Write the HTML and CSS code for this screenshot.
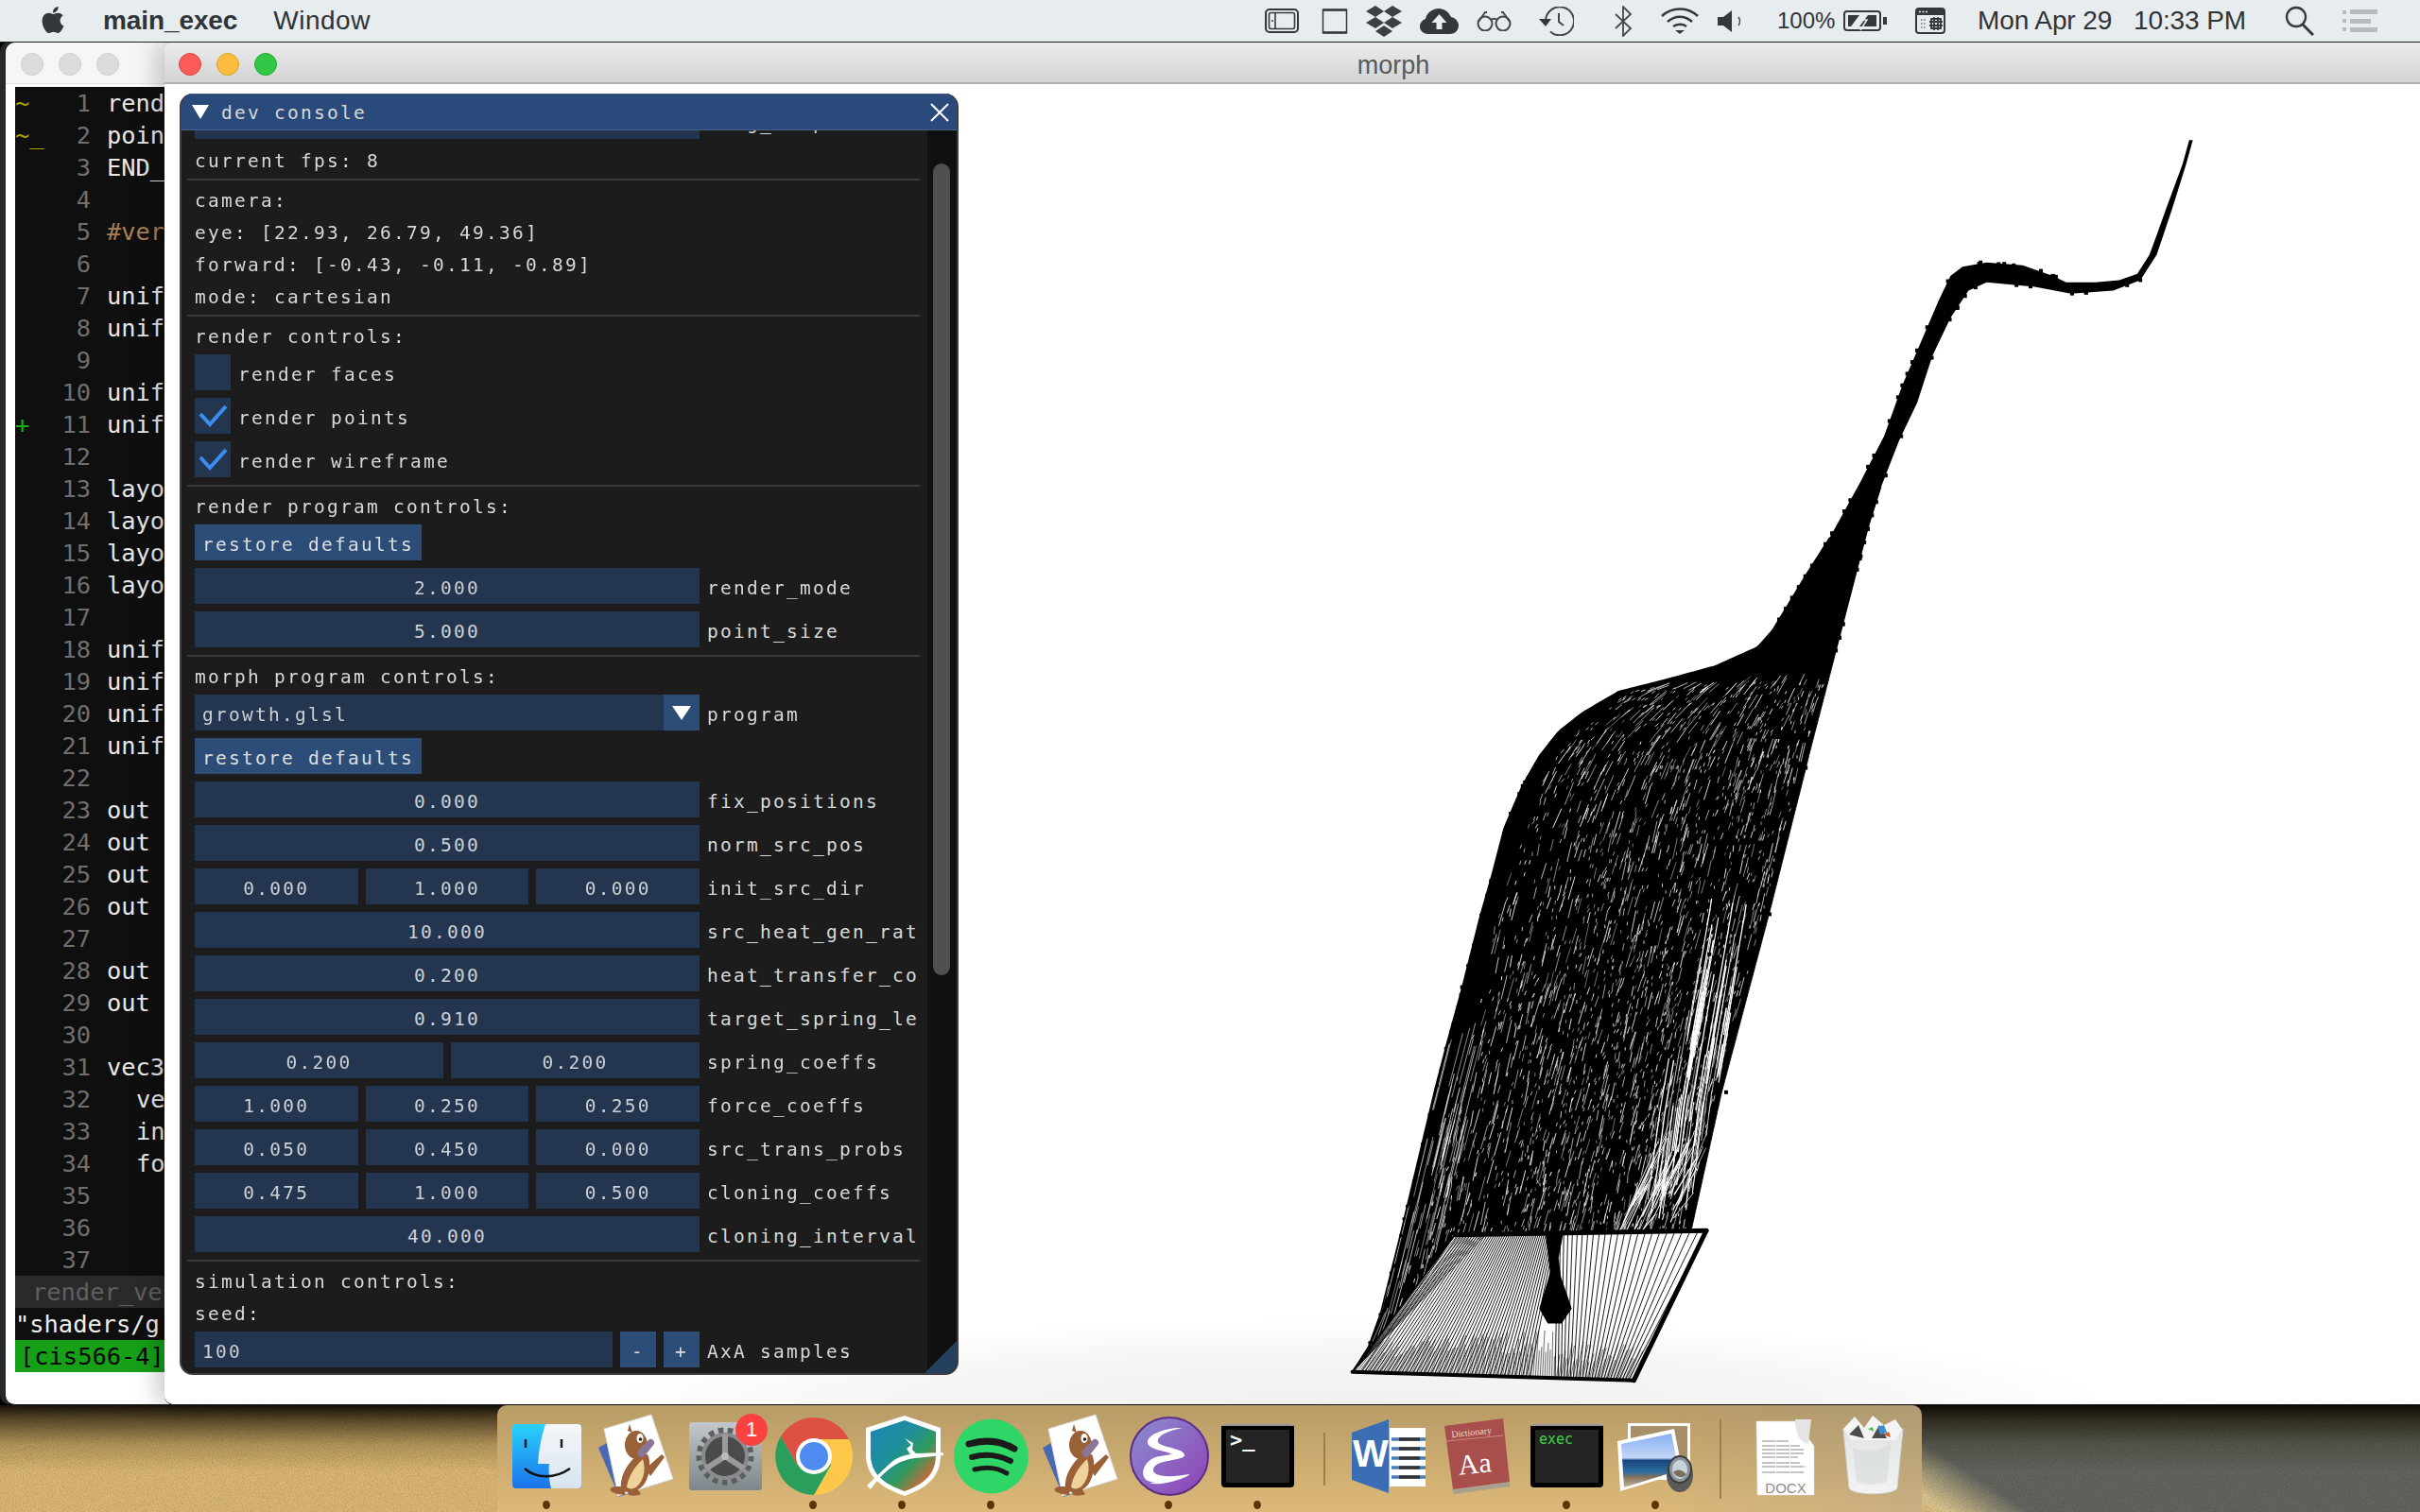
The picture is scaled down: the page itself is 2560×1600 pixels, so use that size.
FILE: index.html
```html
<!DOCTYPE html>
<html lang="en">
<head>
<meta charset="utf-8">
<title>morph</title>
<link rel="stylesheet" href="styles.css">
</head>
<body>
<div class="desktop">
  <div class="wall">
    <svg class="grain" width="2560" height="113"><filter id="sand"><feTurbulence type="fractalNoise" baseFrequency="0.9" numOctaves="2" seed="4"/><feColorMatrix values="0 0 0 0 0  0 0 0 0 0  0 0 0 0 0  0 0 0 .9 -.32"/></filter><rect width="2560" height="113" filter="url(#sand)"/></svg>
  </div>

  <header class="menubar">
    <svg class="apple" width="28" height="32" viewBox="0 0 24 24"><path fill="#33383c" d="M12.152 6.896c-.948 0-2.415-1.078-3.96-1.04-2.04.027-3.91 1.183-4.961 3.014-2.117 3.675-.546 9.103 1.519 12.09 1.013 1.454 2.208 3.09 3.792 3.039 1.52-.065 2.09-.987 3.935-.987 1.831 0 2.35.987 3.96.948 1.637-.026 2.676-1.48 3.676-2.948 1.156-1.688 1.636-3.325 1.662-3.415-.039-.013-3.182-1.221-3.22-4.857-.026-3.04 2.48-4.494 2.597-4.559-1.429-2.09-3.623-2.324-4.39-2.376-2-.156-3.675 1.09-4.61 1.09zM15.53 3.83c.843-1.012 1.4-2.427 1.245-3.83-1.207.052-2.662.805-3.532 1.818-.78.896-1.454 2.338-1.273 3.714 1.338.104 2.715-.688 3.559-1.701"/></svg>
    <span class="menu-app">main_exec</span>
    <span class="menu-item">Window</span>
    <div class="status">
      <svg width="36" height="26" viewBox="0 0 36 26" fill="none" stroke="#33383c"><rect x="1" y="1" width="34" height="24" rx="4" stroke-width="2"/><rect x="4.5" y="4.5" width="27" height="17" rx="2" stroke-width="1.6"/><path d="M11 5v16" stroke-width="1.6"/><circle cx="8" cy="13" r="1" fill="#33383c" stroke="none"/></svg>
      <svg class="g24" width="28" height="27" viewBox="0 0 28 27" fill="none" stroke="#33383c"><rect x="1.5" y="1.5" width="25" height="24" stroke-width="1.5"/><path d="M1 1.5h26M1 25.5h26" stroke-width="2.6"/></svg>
      <svg class="g19" width="38" height="33" viewBox="0 0 38 33" fill="#3b4044"><path d="M10 0l9 6-9 6-10-6zM28 0l10 6-10 6-9-6zM10 12l9 6-9 6-10-6zM28 12l10 6-10 6-9-6zM19 21l9 6-9 6-9-6z"/></svg>
      <svg class="g19" width="41" height="27" viewBox="0 0 41 27"><path fill="#33383c" d="M9 27C3 27 0 23 0 19c0-4 3-7 6-8C7 5 13 0 20 0c6 0 11 4 13 9 5 1 8 5 8 9 0 5-4 9-9 9z"/><path fill="#e7ecef" d="M20.500 6l8 9h-5v7h-6v-7h-5z"/></svg>
      <svg class="g19" width="37" height="21" viewBox="0 0 37 21" fill="none" stroke="#43484c" stroke-width="2"><circle cx="9" cy="13" r="7.500"/><circle cx="28" cy="13" r="7.500"/><path d="M15 9c2-1.500 5-1.500 7 0M2 11L9 1h2M35 11L28 1h-2"/></svg>
      <svg class="g29" width="37" height="31" viewBox="0 0 37 31" fill="none" stroke="#43484c" stroke-width="2"><path d="M7 15a15 15 0 1 1 5 11.500"/><path d="M21 7v9l5 4"/><path fill="#33383c" stroke="none" d="M0 13h13l-6 8z"/></svg>
      <svg class="g43" width="19" height="33" viewBox="0 0 19 33" fill="none" stroke="#43484c" stroke-width="1.800"><path d="M1 9l16 15-8 8V1l8 8L1 24"/></svg>
      <svg class="g30" width="40" height="28" viewBox="0 0 40 28" fill="none" stroke="#33383c" stroke-width="2.500"><path d="M1 9c11-10 27-10 38 0M7 15c8-7 18-7 26 0M13 20c4-3 10-3 14 0"/><path fill="#33383c" stroke="none" d="M15 24h10l-5 4z"/></svg>
      <svg class="g20" width="26" height="23" viewBox="0 0 26 23"><path fill="#33383c" d="M0 7h6l9-7v23l-9-7H0z"/><path fill="none" stroke="#43484c" stroke-width="1.500" d="M22 7c2 3 2 6 0 9"/></svg>
      <span class="status-text g37 pct">100%</span>
      <svg class="g9" width="46" height="22" viewBox="0 0 46 22" fill="none" stroke="#33383c"><rect x="1" y="1" width="38" height="20" rx="3" stroke-width="2"/><path fill="#33383c" stroke="none" d="M5 5h12L8 17H5zM35 5H26L17 17h18z"/><path stroke="#e7ecef" stroke-width="1.500" d="M24 2L19 10h6l-7 11"/><path fill="#33383c" stroke="none" d="M42 7h4v8h-4z"/></svg>
      <svg class="g30" width="32" height="28" viewBox="0 0 32 28" fill="none" stroke="#33383c"><rect x="1" y="1" width="30" height="26" rx="3" stroke-width="2"/><path fill="#33383c" stroke="none" d="M1 1h30v7H1z"/><path stroke="#e7ecef" stroke-width="1.500" stroke-dasharray="2 1.500" d="M4 4.500h9"/><path stroke="#777" stroke-width="1.500" stroke-dasharray="1.500 1.500" d="M6 13h5M6 17h5M6 21h5"/><path stroke-width="1.800" d="M17 12h10v10H17zM20 10v14M24 10v14M15 15h14M15 19h14"/></svg>
      <span class="status-text g34 date">Mon Apr 29</span>
      <span class="status-text g18 time">10:33 PM</span>
      <svg class="g40" width="31" height="32" viewBox="0 0 31 32" fill="none" stroke="#33383c" stroke-width="2.300"><circle cx="12" cy="12" r="10"/><path d="M19 20l11 11" stroke-width="3"/></svg>
      <svg class="g30" width="37" height="24" viewBox="0 0 37 24" fill="#b7bbbd"><path d="M0 1h4v4H0zM8 0h29v5H8zM0 10h4v4H0zM8 10h22v5H8zM0 19h4v4H0zM8 19h29v5H8z"/></svg>
    </div>
  </header>

  <div class="behind"></div>

  <section class="window back">
    <div class="titlebar plain">
      <i class="light off"></i><i class="light off"></i><i class="light off"></i>
    </div>
    <div class="terminal">
      <div class="ln"><i class="sign">~</i><b class="num">1</b><span class="code">rend</span></div>
      <div class="ln"><i class="sign">~_</i><b class="num">2</b><span class="code">poin</span></div>
      <div class="ln"><i class="sign"></i><b class="num">3</b><span class="code">END_</span></div>
      <div class="ln"><i class="sign"></i><b class="num">4</b><span class="code"></span></div>
      <div class="ln"><i class="sign"></i><b class="num">5</b><span class="code pre">#ver</span></div>
      <div class="ln"><i class="sign"></i><b class="num">6</b><span class="code"></span></div>
      <div class="ln"><i class="sign"></i><b class="num">7</b><span class="code">unif</span></div>
      <div class="ln"><i class="sign"></i><b class="num">8</b><span class="code">unif</span></div>
      <div class="ln"><i class="sign"></i><b class="num">9</b><span class="code"></span></div>
      <div class="ln"><i class="sign"></i><b class="num">10</b><span class="code">unif</span></div>
      <div class="ln"><i class="sign add">+</i><b class="num">11</b><span class="code">unif</span></div>
      <div class="ln"><i class="sign"></i><b class="num">12</b><span class="code"></span></div>
      <div class="ln"><i class="sign"></i><b class="num">13</b><span class="code">layo</span></div>
      <div class="ln"><i class="sign"></i><b class="num">14</b><span class="code">layo</span></div>
      <div class="ln"><i class="sign"></i><b class="num">15</b><span class="code">layo</span></div>
      <div class="ln"><i class="sign"></i><b class="num">16</b><span class="code">layo</span></div>
      <div class="ln"><i class="sign"></i><b class="num">17</b><span class="code"></span></div>
      <div class="ln"><i class="sign"></i><b class="num">18</b><span class="code">unif</span></div>
      <div class="ln"><i class="sign"></i><b class="num">19</b><span class="code">unif</span></div>
      <div class="ln"><i class="sign"></i><b class="num">20</b><span class="code">unif</span></div>
      <div class="ln"><i class="sign"></i><b class="num">21</b><span class="code">unif</span></div>
      <div class="ln"><i class="sign"></i><b class="num">22</b><span class="code"></span></div>
      <div class="ln"><i class="sign"></i><b class="num">23</b><span class="code">out</span></div>
      <div class="ln"><i class="sign"></i><b class="num">24</b><span class="code">out</span></div>
      <div class="ln"><i class="sign"></i><b class="num">25</b><span class="code">out</span></div>
      <div class="ln"><i class="sign"></i><b class="num">26</b><span class="code">out</span></div>
      <div class="ln"><i class="sign"></i><b class="num">27</b><span class="code"></span></div>
      <div class="ln"><i class="sign"></i><b class="num">28</b><span class="code">out</span></div>
      <div class="ln"><i class="sign"></i><b class="num">29</b><span class="code">out</span></div>
      <div class="ln"><i class="sign"></i><b class="num">30</b><span class="code"></span></div>
      <div class="ln"><i class="sign"></i><b class="num">31</b><span class="code">vec3</span></div>
      <div class="ln"><i class="sign"></i><b class="num">32</b><span class="code in1">ve</span></div>
      <div class="ln"><i class="sign"></i><b class="num">33</b><span class="code in1">in</span></div>
      <div class="ln"><i class="sign"></i><b class="num">34</b><span class="code in1">fo</span></div>
      <div class="ln"><i class="sign"></i><b class="num">35</b><span class="code"></span></div>
      <div class="ln"><i class="sign"></i><b class="num">36</b><span class="code"></span></div>
      <div class="ln"><i class="sign"></i><b class="num">37</b><span class="code"></span></div>
      <div class="ln status-inactive">render_ve</div>
      <div class="ln msg">"shaders/g</div>
      <div class="ln prompt">[cis566-4]</div>
    </div>
  </section>

  <section class="window front">
    <div class="titlebar">
      <i class="light red"></i><i class="light yellow"></i><i class="light green"></i>
      <span class="title">morph</span>
    </div>
    <div class="viewport">
      <canvas id="mesh" class="mesh" width="950" height="1340"></canvas>
      <div class="dock-shade"></div>
    </div>
  </section>

  <aside class="console">
    <div class="console-title">
      <i class="tri-down"></i>
      <span class="console-name">dev console</span>
      <svg class="close" width="20" height="20" viewBox="0 0 20 20"><path d="M1 1l18 18M19 1L1 19" stroke="#fff" stroke-width="2" fill="none"/></svg>
    </div>
    <div class="console-clip">
      <div class="console-body">
        <div class="row"><div class="fields"><div class="field"></div></div><span class="label">long_step</span></div>
        <p class="txt">current fps: 8</p>
        <hr class="sep">
        <p class="txt">camera:</p>
        <p class="txt">eye: [22.93, 26.79, 49.36]</p>
        <p class="txt">forward: [-0.43, -0.11, -0.89]</p>
        <p class="txt">mode: cartesian</p>
        <hr class="sep">
        <p class="txt">render controls:</p>
        <div class="row"><div class="check"></div><span class="check-label">render faces</span></div>
        <div class="row"><div class="check"><svg width="38" height="38" viewBox="0 0 38 38"><path d="M6 17l10 11L33 9" fill="none" stroke="#3b8ff0" stroke-width="4"/></svg></div><span class="check-label">render points</span></div>
        <div class="row"><div class="check"><svg width="38" height="38" viewBox="0 0 38 38"><path d="M6 17l10 11L33 9" fill="none" stroke="#3b8ff0" stroke-width="4"/></svg></div><span class="check-label">render wireframe</span></div>
        <hr class="sep">
        <p class="txt">render program controls:</p>
        <div class="row"><button class="btn">restore defaults</button></div>
        <div class="row"><div class="fields"><div class="field">2.000</div></div><span class="label">render_mode</span></div>
        <div class="row"><div class="fields"><div class="field">5.000</div></div><span class="label">point_size</span></div>
        <hr class="sep">
        <p class="txt">morph program controls:</p>
        <div class="row"><div class="fields combo"><div class="field left">growth.glsl</div><div class="combo-btn"><i class="tri-small"></i></div></div><span class="label">program</span></div>
        <div class="row"><button class="btn">restore defaults</button></div>
        <div class="row"><div class="fields"><div class="field">0.000</div></div><span class="label">fix_positions</span></div>
        <div class="row"><div class="fields"><div class="field">0.500</div></div><span class="label">norm_src_pos</span></div>
        <div class="row"><div class="fields"><div class="field">0.000</div><div class="field">1.000</div><div class="field">0.000</div></div><span class="label">init_src_dir</span></div>
        <div class="row"><div class="fields"><div class="field">10.000</div></div><span class="label">src_heat_gen_rat</span></div>
        <div class="row"><div class="fields"><div class="field">0.200</div></div><span class="label">heat_transfer_co</span></div>
        <div class="row"><div class="fields"><div class="field">0.910</div></div><span class="label">target_spring_le</span></div>
        <div class="row"><div class="fields"><div class="field">0.200</div><div class="field">0.200</div></div><span class="label">spring_coeffs</span></div>
        <div class="row"><div class="fields"><div class="field">1.000</div><div class="field">0.250</div><div class="field">0.250</div></div><span class="label">force_coeffs</span></div>
        <div class="row"><div class="fields"><div class="field">0.050</div><div class="field">0.450</div><div class="field">0.000</div></div><span class="label">src_trans_probs</span></div>
        <div class="row"><div class="fields"><div class="field">0.475</div><div class="field">1.000</div><div class="field">0.500</div></div><span class="label">cloning_coeffs</span></div>
        <div class="row"><div class="fields"><div class="field">40.000</div></div><span class="label">cloning_interval</span></div>
        <hr class="sep">
        <p class="txt">simulation controls:</p>
        <p class="txt">seed:</p>
        <div class="row"><div class="fields"><div class="field left">100</div><button class="btn square">-</button><button class="btn square">+</button></div><span class="label">AxA samples</span></div>
      </div>
    </div>
    <div class="scrollbar"><div class="thumb"></div></div>
    <svg class="grip" width="34" height="34" viewBox="0 0 34 34"><path d="M34 0v24q0 10-10 10H0z" fill="#25405f"/></svg>
  </aside>

  <footer class="dock">
    <svg width="0" height="0" class="defs"><defs>
      <linearGradient id="finderL" x1="0" y1="0" x2="0" y2="1"><stop offset="0" stop-color="#2ad2fb"/><stop offset="1" stop-color="#1c72ea"/></linearGradient>
      <linearGradient id="finderR" x1="0" y1="0" x2="0" y2="1"><stop offset="0" stop-color="#f6f7f8"/><stop offset="1" stop-color="#d7e4f0"/></linearGradient>
      <linearGradient id="metal" x1="0" y1="0" x2="0" y2="1"><stop offset="0" stop-color="#c2c8cc"/><stop offset="1" stop-color="#7d868a"/></linearGradient>
      <linearGradient id="dash" x1="0" y1="0" x2="1" y2="1"><stop offset="0" stop-color="#1a86b8"/><stop offset=".4" stop-color="#1f8f9a"/><stop offset=".62" stop-color="#2f9a5c"/><stop offset=".85" stop-color="#c9693a"/><stop offset="1" stop-color="#e2502a"/></linearGradient>
      <linearGradient id="emacs" x1="0" y1="0" x2="1" y2="1"><stop offset="0" stop-color="#8a8fd0"/><stop offset="1" stop-color="#8f3fb5"/></linearGradient>
      <linearGradient id="sky" x1="0" y1="0" x2="0" y2="1"><stop offset="0" stop-color="#86aef2"/><stop offset=".45" stop-color="#c4d8f6"/><stop offset=".5" stop-color="#17467e"/><stop offset=".72" stop-color="#2e6f9e"/><stop offset=".8" stop-color="#7f6f5c"/><stop offset="1" stop-color="#c9b79c"/></linearGradient>
      <linearGradient id="cup" x1="0" y1="0" x2="0" y2="1"><stop offset="0" stop-color="#e2e4e4"/><stop offset="1" stop-color="#f2f3f3"/></linearGradient>
      <symbol id="platypus" viewBox="0 0 94 94">
        <path fill="#4a69b5" d="M8 40l14-8 22 55-14 5z"/>
        <path fill="#fff" stroke="#d9d9d9" stroke-width="1" d="M14 20L64 5l23 68-58 18z"/>
        <path fill="#9a6038" d="M36 90c-6 0-18-3-15-7 3-3 11-2 16-1zM40 90l-2-8 8-4 7 11c-4 2-8 2-13 1z"/>
        <path fill="#9a6038" d="M32 84c-2-14 8-29 17-36l11-1c4 7 3 28-8 36-6 4-15 6-20 1z"/>
        <path fill="#efd19a" d="M38 82c1-10 8-22 17-30 3 9 2 21-6 29-4 3-8 3-11 1z"/>
        <ellipse fill="#9a6038" cx="48" cy="37" rx="12" ry="15"/>
        <path fill="#9a6038" d="M58 62l17-15 3 3-15 20zM41 15l3 9-5-2z"/>
        <path fill="#8a7596" d="M50 43l12-12c3-1 6 2 5 5L56 50c-4 1-8-2-6-7z"/>
        <ellipse fill="#fff" cx="52" cy="30" rx="3.500" ry="5"/><circle fill="#222" cx="52.500" cy="31" r="1.800"/>
      </symbol>
      <symbol id="termicon" viewBox="0 0 94 94">
        <rect x="9" y="15" width="77" height="67" rx="4" fill="#000"/>
        <path d="M10 16h75" stroke="#c9c9c9" stroke-width="1.500"/>
        <rect x="14" y="21" width="67" height="56" fill="#242424"/>
      </symbol>
    </defs></svg>

    <div class="slot run"><svg width="94" height="94" viewBox="0 0 94 94"><rect x="11" y="15" width="73" height="68" rx="4" fill="url(#finderL)"/><path d="M46 15h34a4 4 0 0 1 4 4v60a4 4 0 0 1-4 4H52c-2-8-3-16-2-26H38c1-16 4-30 8-42z" fill="url(#finderR)"/><path d="M25 31v9M63 31v9" stroke="#1a1a2a" stroke-width="2.500"/><path d="M24 62c12 11 32 11 48 0" fill="none" stroke="#111" stroke-width="2.500"/></svg><i class="dot"></i></div>
    <div class="slot"><svg width="94" height="94" viewBox="0 0 94 94"><use href="#platypus"/></svg><i class="dot none"></i></div>
    <div class="slot"><svg width="94" height="94" viewBox="0 0 94 94"><rect x="10" y="13" width="77" height="72" rx="3" fill="url(#metal)"/><circle cx="48" cy="49" r="25" fill="none" stroke="#5e5e5e" stroke-width="11" stroke-dasharray="5 4.200"/><circle cx="48" cy="49" r="23" fill="#4b4b4b" stroke="#8b8b8b" stroke-width="4"/><path d="M48 49V26M48 49L28 62M48 49l20 13" stroke="#9b9b9b" stroke-width="6"/><circle cx="48" cy="49" r="4" fill="#bbb"/><circle cx="76" cy="21" r="17" fill="#f9423f"/><text x="76" y="28" class="badge">1</text></svg><i class="dot none"></i></div>
    <div class="slot run"><svg width="94" height="94" viewBox="0 0 94 94"><path fill="#dd5144" d="M48 8a41 41 0 0 1 37 23H48L30 58 13 28A41 41 0 0 1 48 8z"/><path fill="#fdc74a" d="M85 31a41 41 0 0 1-37 59l18-32-18-27z"/><path fill="#2a9f5c" d="M13 28a41 41 0 0 0 35 62l18-32H30z"/><circle cx="48" cy="49" r="19" fill="#fff"/><circle cx="48" cy="49" r="15" fill="#4e8bf0"/></svg><i class="dot"></i></div>
    <div class="slot run"><svg width="94" height="94" viewBox="0 0 94 94"><path fill="#fff" d="M9 19L50 6l38 13v28c0 24-14 35-38 44C24 82 9 70 9 47z"/><path fill="url(#dash)" d="M14 23L50 11l33 12v24c0 21-12 31-33 39C27 78 14 67 14 47z"/><path fill="#fff" d="M10 80l24-23c6-6 14-9 22-10l-4-6 5-4-7-7 9 5-1 7 4 4 29-1v3l-30 3C44 53 30 62 14 84z"/></svg><i class="dot"></i></div>
    <div class="slot run"><svg width="94" height="94" viewBox="0 0 94 94"><circle cx="47.500" cy="49" r="39.500" fill="#2fd566"/><g fill="none" stroke="#1b1b1b" stroke-linecap="round"><path d="M24 36c17-5 34-3 48 5" stroke-width="7"/><path d="M27 50c14-4 29-2 41 4" stroke-width="6"/><path d="M30 63c12-3 24-2 34 4" stroke-width="5"/></g></svg><i class="dot"></i></div>
    <div class="slot"><svg width="94" height="94" viewBox="0 0 94 94"><use href="#platypus"/></svg><i class="dot none"></i></div>
    <div class="slot run"><svg width="94" height="94" viewBox="0 0 94 94"><circle cx="48" cy="49" r="41" fill="url(#emacs)" stroke="#5a2d86" stroke-width="2"/><path fill="#fff" d="M62 19c-12 2-28 8-26 15 2 6 28 6 28 14 0 6-32 4-33 15-1 9 22 8 38 5 2 2-30 14-42 9 10-1 8 1-2-2-8-4-6-18 6-24 6-3 22-3 18-5-6-3-24-4-24-12 0-9 22-16 37-15z"/></svg><i class="dot"></i></div>
    <div class="slot run"><svg width="94" height="94" viewBox="0 0 94 94"><use href="#termicon"/><text x="18" y="39" class="tprompt">&gt;_</text></svg><i class="dot"></i></div>

    <div class="dock-sep short"></div>

    <div class="slot"><svg width="94" height="94" viewBox="0 0 94 94"><rect x="48" y="19" width="38" height="62" fill="#fff"/><path d="M50 31h36M50 41h36M50 51h36M50 61h36M50 71h36" stroke="#4a7fba" stroke-width="3.500"/><path d="M58 31h22M58 41h22M58 51h22M58 61h22M58 71h22" stroke="#333" stroke-width="3.500"/><path fill="#3a6db4" d="M8 24l39-14v78L8 74z"/><text x="28" y="60" class="word">W</text></svg><i class="dot none"></i></div>
    <div class="slot"><svg width="94" height="94" viewBox="0 0 94 94"><path fill="#a9a18f" d="M20 84l61-8v5l-59 8z"/><path fill="#a84e4c" d="M12 17L74 9l7 67-60 8z"/><path d="M14 33l60-6" stroke="#c98a86" stroke-width="1"/><text x="41" y="27" class="dict" transform="rotate(-6 41 27)">Dictionary</text><text x="45" y="67" class="aa" transform="rotate(-6 45 67)">Aa</text></svg><i class="dot none"></i></div>
    <div class="slot run"><svg width="94" height="94" viewBox="0 0 94 94"><use href="#termicon"/><text x="18" y="36" class="texec">exec</text></svg><i class="dot"></i></div>
    <div class="slot run"><svg width="94" height="94" viewBox="0 0 94 94"><rect x="18" y="14" width="66" height="60" fill="#fff"/><rect x="21" y="17" width="60" height="54" fill="#a98e6a"/><path fill="#fff" d="M7 33l60-13 9 46-66 20z"/><path fill="url(#sky)" d="M11 36l53-11 8 39-58 18z"/><ellipse cx="73" cy="69" rx="14" ry="18" fill="#5a5a58"/><ellipse cx="73" cy="63" rx="12" ry="14" fill="#8b949b" stroke="#3b3b3b" stroke-width="2"/><ellipse cx="73" cy="63" rx="8" ry="10" fill="#c7d3dd"/><path d="M66 66c4-4 9-3 14 2-4 5-10 4-14-2z" fill="#7d6f60"/></svg><i class="dot"></i></div>

    <div class="dock-sep tall"></div>

    <div class="slot"><svg width="94" height="94" viewBox="0 0 94 94"><path fill="#fff" stroke="#ddd" stroke-width=".5" d="M16 12h41l20 26v52H17z"/><path fill="#e4e4e4" d="M57 10h17l-3 26c-6 0-14-8-14-26z"/><path d="M22 33h28M22 38h40M22 42h44M22 46h44M22 50h38M22 56h40M22 60h46M22 66h44" stroke="#8a8a8a" stroke-width="1.200" stroke-dasharray="14 1"/><text x="47" y="88" class="docx">DOCX</text></svg><i class="dot none"></i></div>
    <div class="slot"><svg width="94" height="94" viewBox="0 0 94 94"><path fill="url(#cup)" stroke="#d3d6d6" d="M14 20h63l-6 62c-1 9-50 9-51 0z"/><path fill="#cfd3d3" opacity=".45" d="M24 40c14 6 30 4 40-4l-4 40c-10 4-22 4-32 0z"/><path fill="#f4f4f4" d="M14 20l12-13 10 12 9-13 12 10 12-6 7 10-6 12H22z"/><path fill="#4d4d4d" d="M20 26l10-10 6 14zM44 30l8-14 8 14z"/><path fill="#3e8fd0" d="M50 18l7-2 3 8-7 2z"/><path fill="#3ec04f" d="M40 20l5-2 1 5z"/><path fill="#cf5a2b" d="M56 26l6-3 2 6z"/></svg><i class="dot none"></i></div>
  </footer>
</div>
<script src="mesh.js"></script>
</body>
</html>
```

FILE: styles.css
```css
* { box-sizing: border-box; }
html, body { margin: 0; padding: 0; background: #000; }
p { margin: 0; }

.desktop {
  position: relative;
  width: 2560px;
  height: 1600px;
  overflow: hidden;
  display: flex;
  flex-direction: column;
  justify-content: space-between;
  font-family: "Liberation Sans", Arial, sans-serif;
}

.wall {
  position: absolute;
  left: 0;
  bottom: 0;
  width: 2560px;
  height: 113px;
  background:
    linear-gradient(180deg, rgba(14,10,2,.94) 0, rgba(30,22,8,.66) 16px, rgba(40,30,10,.22) 42px, rgba(40,30,10,0) 70px),
    linear-gradient(33deg, #dcb873 0, #dcb873 1105px, #dcc690 1122px, #62665f 1170px, #62665f 100%);
}
.grain { display: block; opacity: .35; }

/* menu bar */
.menubar {
  position: relative;
  z-index: 5;
  display: flex;
  align-items: center;
  height: 45px;
  padding-left: 42px;
  background: #e7ecef;
  border-bottom: 1px solid #1d2023;
  color: #2f3438;
  font-size: 28px;
}
.apple { margin-top: -2px; }
.menu-app { margin-left: 39px; font-weight: 700; font-size: 28px; letter-spacing: -.1px; }
.menu-item { margin-left: 38px; letter-spacing: .5px; }
.status { display: flex; align-items: center; margin-left: auto; padding-right: 45px; }
.status-text { white-space: nowrap; }
.pct { width: 61px; font-size: 24px; }
.date { width: 147px; letter-spacing: -.1px; }
.time { width: 120px; letter-spacing: -.1px; }
.g9 { margin-left: 9px; }
.g18 { margin-left: 18px; }
.g19 { margin-left: 19px; }
.g20 { margin-left: 20px; }
.g24 { margin-left: 24px; }
.g29 { margin-left: 29px; }
.g30 { margin-left: 30px; }
.g34 { margin-left: 34px; }
.g37 { margin-left: 37px; }
.g40 { margin-left: 40px; }
.g43 { margin-left: 43px; }

/* windows */
.behind {
  position: absolute;
  left: 0;
  top: 44px;
  width: 40px;
  height: 1443px;
  background: #26282a;
  border-radius: 10px;
  border-bottom: 1px solid #000;
}
.window {
  position: absolute;
  top: 45px;
  height: 1442px;
  background: #fff;
  border-radius: 10px 10px 10px 10px;
  border-bottom: 1px solid #0b0b0b;
  overflow: hidden;
}
.back { left: 6px; width: 260px; }
.front {
  left: 174px;
  width: 2600px;
  display: flex;
  flex-direction: column;
  box-shadow: -8px 0 26px rgba(0,0,0,.22);
  overflow: visible;
}
.titlebar {
  position: relative;
  display: flex;
  align-items: center;
  gap: 16px;
  flex: none;
  height: 44px;
  padding: 3px 0 0 15px;
  background: linear-gradient(180deg, #ececec 0, #d3d3d3 100%);
  border-bottom: 2px solid #b0b0b0;
  border-radius: 10px 10px 0 0;
}
.titlebar.plain {
  background: #f6f6f6;
  border-bottom: 1px solid #e2e2e2;
  padding-left: 16px;
}
.light { display: block; width: 24px; height: 24px; border-radius: 50%; flex: none; }
.off { background: #dcdcdc; border: 1px solid #cfcfcf; }
.red { background: #fc5b57; border: 1px solid #e0443e; }
.yellow { background: #fdbc40; border: 1px solid #dea123; }
.green { background: #33c748; border: 1px solid #1dad2b; }
.title {
  position: absolute;
  left: 0;
  right: 0;
  top: 9px;
  text-align: center;
  font-size: 27px;
  color: #585858;
}
.viewport { position: relative; flex: 1; background: #fff; overflow: hidden; border-radius: 0 0 10px 10px; }
.mesh { position: absolute; left: 1226px; top: 41px; display: block; }
.dock-shade {
  position: absolute;
  left: 0;
  bottom: 0;
  width: 2400px;
  height: 90px;
  background: radial-gradient(ellipse 800px 90px at 1260px 100%, rgba(0,0,0,.06), rgba(0,0,0,.04) 60%, rgba(0,0,0,0) 100%);
}

/* terminal */
.terminal {
  margin: 3px 0 0 10px;
  width: 158px;
  overflow: hidden;
  background: #0f0f0f;
  font-family: "DejaVu Sans Mono", monospace;
  font-size: 25.4px;
  color: #e8e8e8;
}
.ln { display: flex; height: 34px; line-height: 34px; white-space: pre; }
.sign { width: 33px; flex: none; font-style: normal; color: #a7a700; }
.sign.add { color: #12b212; }
.num { width: 47px; flex: none; text-align: right; font-weight: 400; color: #6f6f6f; }
.code { margin-left: 17px; }
.code.pre { color: #a97f55; }
.code.in1 { margin-left: 48px; }
.status-inactive { background: #2a2a2a; color: #5f5f5f; padding-left: 18px; }
.msg { color: #eee; }
.prompt { background: #15a018; color: #050505; padding-left: 5px; }

/* imgui console */
.console {
  position: absolute;
  z-index: 3;
  left: 190px;
  top: 99px;
  width: 824px;
  height: 1356px;
  display: flex;
  flex-direction: column;
  background: #1c1c1c;
  border: 2px solid #3f3f47;
  border-top: 0;
  border-radius: 14px;
  overflow: hidden;
  color: #d8d8d8;
  font-family: "DejaVu Sans Mono", monospace;
  font-size: 19.5px;
  letter-spacing: 2.26px;
}
.console-title {
  display: flex;
  align-items: center;
  flex: none;
  height: 39px;
  padding-left: 11px;
  background: #2a4a7b;
  border-top: 1px solid #46597a;
  border-bottom: 1px solid #4a6288;
}
.tri-down { display: block; width: 0; height: 0; border-left: 9px solid transparent; border-right: 9px solid transparent; border-top: 15px solid #fff; }
.console-name { margin-left: 13px; padding-top: 2px; }
.close { margin-left: auto; margin-right: 8px; }
.console-clip { flex: 1; overflow: hidden; }
.console-body {
  display: flex;
  flex-direction: column;
  gap: 8px;
  margin-top: -29px;
  padding-left: 14px;
}
.txt { height: 26px; line-height: 31px; white-space: pre; }
.sep {
  width: 775px;
  height: 2px;
  margin: 0 0 -2px -8px;
  border: 0;
  background: #3a3a41;
}
.row { display: flex; align-items: center; height: 38px; flex: none; }
.fields { display: flex; gap: 8px; width: 534px; height: 38px; flex: none; }
.field {
  flex: 1;
  display: flex;
  align-items: center;
  justify-content: center;
  padding-top: 4px;
  background: #23354f;
  color: #ccd0d6;
  white-space: pre;
}
.field.left { justify-content: flex-start; padding-left: 8px; }
.combo { gap: 0; }
.combo-btn { width: 38px; flex: none; display: flex; align-items: center; justify-content: center; background: #2b4d78; }
.tri-small { display: block; width: 0; height: 0; border-left: 10px solid transparent; border-right: 10px solid transparent; border-top: 15px solid #fff; }
.label { width: 224px; margin-left: 8px; overflow: hidden; white-space: pre; padding-top: 4px; }
.check { width: 38px; height: 38px; flex: none; background: #23354f; }
.check svg { display: block; }
.check-label { margin-left: 8px; padding-top: 4px; white-space: pre; }
.btn {
  display: block;
  height: 38px;
  width: 240px;
  padding: 4px 0 0;
  border: 0;
  background: #2b4d78;
  color: #dedede;
  font: inherit;
  letter-spacing: inherit;
}
.btn.square { width: 38px; flex: none; }
.scrollbar {
  position: absolute;
  right: 0;
  top: 39px;
  bottom: 0;
  width: 31px;
  background: #101010;
}
.thumb {
  margin: 35px 0 0 6px;
  width: 18px;
  height: 859px;
  border-radius: 9px;
  background: #4f4f4f;
}
.grip { position: absolute; right: 0; bottom: 0; display: block; }

/* dock */
.dock {
  position: relative;
  z-index: 4;
  display: flex;
  width: 1507px;
  height: 113px;
  margin-left: 526px;
  padding: 5px 0 0 5px;
  border-radius: 10px 10px 0 0;
  background:
    linear-gradient(90deg, rgba(150,150,150,0) 80%, rgba(150,150,150,.28) 100%),
    linear-gradient(180deg, #b89c66 0, #ddb979 100%);
}
.defs { position: absolute; }
.slot { display: flex; flex-direction: column; align-items: center; width: 94px; flex: none; }
.slot svg { display: block; }
.dot { display: block; width: 8px; height: 9px; margin-top: 2px; border-radius: 50%; background: #5c3504; }
.dot.none { background: transparent; }
.dock-sep { flex: none; width: 45px; position: relative; }
.dock-sep::after { content: ""; position: absolute; left: 23px; width: 2px; background: #9a7f50; }
.dock-sep.short::after { top: 24px; height: 56px; }
.dock-sep.tall { width: 44px; }
.dock-sep.tall::after { left: 21px; top: 10px; height: 84px; }

.badge { font: 400 22px "Liberation Sans", sans-serif; fill: #fff; text-anchor: middle; }
.tprompt { font: 700 22px "DejaVu Sans Mono", monospace; fill: #fff; }
.texec { font: 400 15px "DejaVu Sans Mono", monospace; fill: #3ed43e; }
.word { font: 700 40px "Liberation Sans", sans-serif; fill: #fff; text-anchor: middle; }
.dict { font: 400 10px "Liberation Serif", serif; fill: #efdcc9; text-anchor: middle; }
.aa { font: 400 30px "Liberation Serif", serif; fill: #fff; text-anchor: middle; }
.docx { font: 400 15px "Liberation Sans", sans-serif; fill: #8a8a8a; text-anchor: middle; }
```

FILE: mesh.js
```js
(function () {
  var canvas = document.getElementById('mesh');
  var g = canvas.getContext('2d');
  var OX = 1400, OY = 130;

  var seed = 12345;
  function rnd() {
    seed = (seed + 0x6D2B79F5) | 0;
    var t = Math.imul(seed ^ (seed >>> 15), 1 | seed);
    t = (t + Math.imul(t ^ (t >>> 7), 61 | t)) ^ t;
    return ((t ^ (t >>> 14)) >>> 0) / 4294967296;
  }

  function up(p) { return [p[0] / 1.568 + 1400 - OX, p[1] / 2.24 + 100 - OY]; }
  function lo(p) { return [p[0] / 1.568 + 1400 - OX, p[1] / 2.24 + 800 - OY]; }

  function poly(pts) {
    g.beginPath();
    pts.forEach(function (p, i) { i ? g.lineTo(p[0], p[1]) : g.moveTo(p[0], p[1]); });
  }

  function resample(pts, n) {
    var d = [0], i;
    for (i = 1; i < pts.length; i++) {
      d[i] = d[i - 1] + Math.hypot(pts[i][0] - pts[i - 1][0], pts[i][1] - pts[i - 1][1]);
    }
    var out = [], j = 0;
    for (i = 0; i <= n; i++) {
      var s = d[d.length - 1] * i / n;
      while (j < d.length - 2 && d[j + 1] < s) j++;
      var f = (s - d[j]) / (d[j + 1] - d[j] || 1);
      out.push([pts[j][0] + (pts[j + 1][0] - pts[j][0]) * f, pts[j][1] + (pts[j + 1][1] - pts[j][1]) * f]);
    }
    return out;
  }

  /* neck: tip down to the shoulder */
  var neckUpper = [[1436,108],[1425,165],[1398,270],[1383,330],[1370,380],[1350,425],[1320,440],[1280,445],[1232,445],[1210,430],[1160,405],[1100,398],[1060,408],[1040,430],[1020,490],[990,590],[960,690],[930,810],[890,920],[840,1050],[800,1140],[745,1270]].map(up);
  var neckLower = [[1442,108],[1431,165],[1408,270],[1394,330],[1382,380],[1355,440],[1310,465],[1240,472],[1180,456],[1100,445],[1070,465],[1040,530],[1010,620],[985,730],[955,820],[925,930],[905,1020],[890,1100],[870,1210],[850,1320]].map(up);

  /* body */
  var left = [[48,1460],[75,1400],[95,1320],[125,1150],[150,1000],[185,790],[205,680],[230,550],[260,380],[280,280],[300,170],[330,70],[358,0]].map(lo)
    .concat([[390,1510],[430,1465],[490,1415],[560,1390],[650,1355],[720,1310],[745,1270],[800,1140],[840,1050]].map(up));
  var right = [[610,1125],[660,800],[740,370],[800,30],[805,0]].map(lo)
    .concat([[850,1320],[890,1100],[905,1020],[925,930]].map(up));

  var N = 240;
  var L = resample(left, N), R = resample(right, N);
  function at(i, u) {
    return [L[i][0] + (R[i][0] - L[i][0]) * u, L[i][1] + (R[i][1] - L[i][1]) * u];
  }

  var A = lo([48,1460]), B = lo([515,1480]), C = lo([635,1125]), D = lo([218,1135]);

  g.fillStyle = '#000';
  g.save();
  poly(left.concat(right.slice().reverse(), [D, A]));
  g.closePath();
  g.clip();

  poly(L.concat(R.slice().reverse()));
  g.closePath();
  g.fill();

  /* white flecks along the strands, denser toward the base and the right side */
  g.strokeStyle = '#fff';
  g.lineCap = 'butt';
  var k, i, u, s, len, p, q;
  for (k = 0; k < 3000; k++) {
    u = 0.06 + 0.92 * Math.pow(rnd(), 0.85);
    i = Math.floor(N * 0.74 * Math.pow(rnd(), 1.15));
    len = 1 + Math.floor(Math.pow(rnd(), 3) * 6);
    p = at(i, u); q = at(Math.min(N, i + len), u + (rnd() - 0.5) * 0.008);
    g.lineWidth = 0.4 + rnd() * 0.5;
    g.beginPath(); g.moveTo(p[0], p[1]); g.lineTo(q[0], q[1]); g.stroke();
  }
  /* hairlines down the left flank */
  for (k = 0; k < 80; k++) {
    u = rnd() * 0.14;
    i = Math.floor(rnd() * 70);
    len = 4 + Math.floor(rnd() * 14);
    p = at(i, u); q = at(i + len, u);
    g.lineWidth = 0.4 + rnd() * 0.35;
    g.beginPath(); g.moveTo(p[0], p[1]); g.lineTo(q[0], q[1]); g.stroke();
  }
  /* long strands on the right */
  for (k = 0; k < 60; k++) {
    u = 0.82 + rnd() * 0.165;
    i = 8 + Math.floor(rnd() * 60);
    len = 12 + Math.floor(rnd() * 40);
    g.lineWidth = 0.5 + rnd() * 1;
    g.beginPath();
    for (s = i; s < i + len; s++) {
      p = at(s, u - 0.001 * (s - i));
      s === i ? g.moveTo(p[0], p[1]) : g.lineTo(p[0], p[1]);
    }
    g.stroke();
  }
  /* fan of strands low on the right side */
  for (k = 0; k < 34; k++) {
    u = 0.74 + rnd() * 0.2;
    i = 3 + Math.floor(rnd() * 18);
    len = 6 + Math.floor(rnd() * 16);
    g.lineWidth = 0.6 + rnd() * 0.7;
    p = at(i, u); q = at(i + len, u + 0.05);
    g.beginPath(); g.moveTo(p[0], p[1]); g.lineTo(q[0], q[1]); g.stroke();
  }
  g.restore();

  /* outer edge strands */
  g.strokeStyle = '#000';
  g.lineWidth = 1;
  poly(R); g.stroke();
  poly(L); g.lineWidth = 1.6; g.stroke();

  poly(neckUpper.concat(neckLower.slice().reverse()));
  g.closePath();
  g.fill();

  /* base fans */
  function mix(a, b, f) { return [a[0] + (b[0] - a[0]) * f, a[1] + (b[1] - a[1]) * f]; }
  function seg(a, b, w) {
    g.lineWidth = w;
    g.beginPath(); g.moveTo(a[0], a[1]); g.lineTo(b[0], b[1]); g.stroke();
  }
  var X = mix(D, C, 0.41);
  var t;
  /* long strands: left half rising to the pinch */
  for (k = 0; k <= 46; k++) {
    t = k / 46;
    seg(mix(A, B, 0.03 + t * 0.6), mix(D, X, Math.pow(t, 0.85)), 0.9);
  }
  /* long strands: right half fanning out from near the far corner */
  for (k = 0; k <= 24; k++) {
    t = k / 24;
    seg(mix(A, B, 0.72 + t * 0.26), mix(X, C, Math.pow(t, 1.3)), 0.9);
  }
  /* fine hatching in the lower half */
  for (k = 0; k <= 120; k++) {
    t = k / 120;
    var b = mix(A, B, t);
    var mid = t < 0.72 ? mix(mix(A, D, 0.5), mix(X, lo([385,1320]), 0.6), t / 0.72)
                       : mix(lo([400,1300]), mix(B, C, 0.5), (t - 0.72) / 0.28);
    seg(b, mix(b, mid, 0.22 + 0.28 * rnd()), 0.55);
  }
  /* left flank, fanning from the corner */
  for (k = 0; k <= 10; k++) {
    t = k / 10;
    seg(A, mix(D, X, t * 0.3), 0.7);
  }

  /* dark pinch in the middle of the base */
  poly([[368,1130],[398,1130],[390,1190],[394,1235],[412,1310],[395,1345],[372,1345],[358,1310],[376,1225]].map(lo));
  g.closePath();
  g.fill();

  /* rim of the base */
  g.lineCap = 'round';
  poly([A, B]); g.lineWidth = 4; g.stroke();
  poly([B, C]); g.lineWidth = 5; g.stroke();
  poly([D, C]); g.lineWidth = 5; g.stroke();
  poly([A, D]); g.lineWidth = 2; g.stroke();

  /* vertices standing off the strands */
  [[800,28],[740,375],[668,797],[548,825],[640,470],[700,155],[230,548],[262,378],[278,296]].map(lo)
    .concat([[850,1318],[890,1100],[1090,398],[1120,402],[1145,405],[1190,418],[1215,432]].map(up))
    .forEach(function (p) { g.fillRect(p[0] - 2, p[1] - 2, 4, 4); });
  for (k = 0; k < 35; k++) {
    p = L[Math.floor(rnd() * 150)];
    g.fillRect(p[0] - 2 + rnd() * 2, p[1] - 1.5, 3, 3);
  }
  var nu = resample(neckUpper.slice(9), 40), nl = resample(neckLower.slice(5), 40);
  for (k = 0; k < 30; k++) {
    p = nu[Math.floor(rnd() * 40)];
    g.fillRect(p[0] - 2, p[1] - 2, 4, 4);
    p = nl[Math.floor(rnd() * 40)];
    g.fillRect(p[0] - 2, p[1] - 2, 4, 4);
  }
})();
```
